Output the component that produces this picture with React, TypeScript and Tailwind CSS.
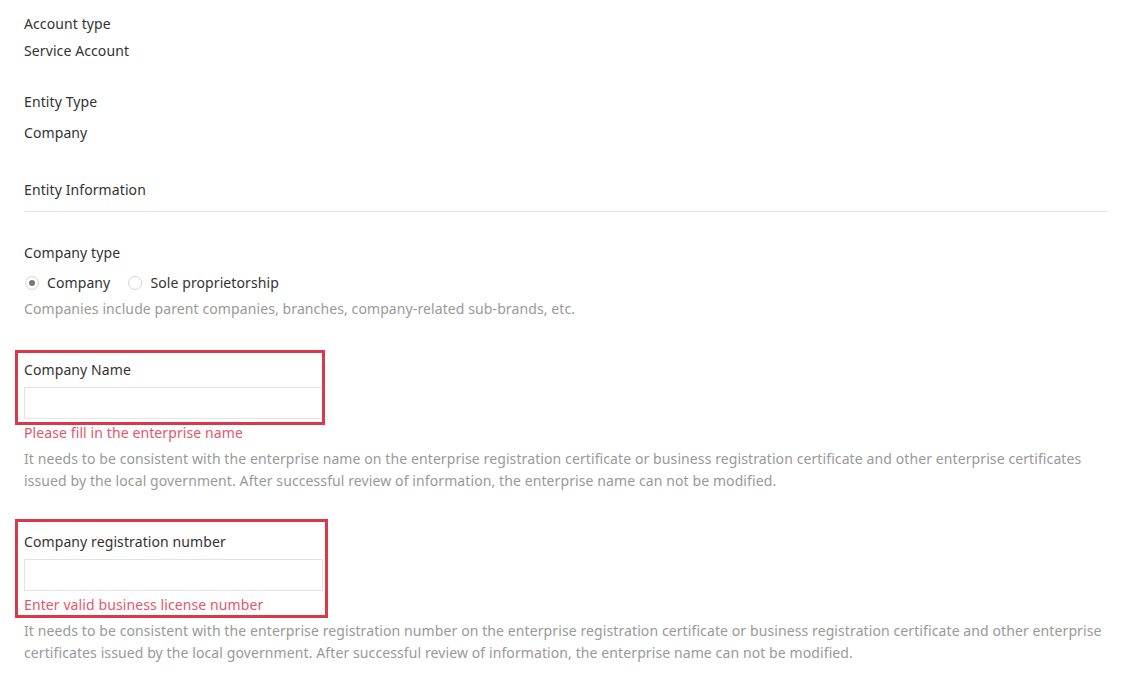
import React from "react";

const font = { fontFamily: '"Noto Sans", "Open Sans", sans-serif' };

function Radio({ checked, label }: { checked?: boolean; label: string }) {
  return (
    <label className="flex items-center gap-[8px]">
      <span className="w-[14px] h-[14px] rounded-full border border-[#d4d4d4] bg-white flex items-center justify-center">
        {checked && <span className="w-[6px] h-[6px] rounded-full bg-[#7a7a7a]" />}
      </span>
      <span className="text-[14px] text-[#333]">{label}</span>
    </label>
  );
}

export default function App() {
  return (
    <div className="w-[1140px] h-[685px] bg-white overflow-hidden" style={font}>
      <div className="pl-[24px] pr-[33px] pt-[13px] text-[14px] leading-[22px] tracking-[0.1px] text-[#333]">
        <div>Account type</div>
        <div className="mt-[5px]">Service Account</div>

        <div className="mt-[29px]">Entity Type</div>
        <div className="mt-[9px]">Company</div>

        <div className="mt-[35px]">Entity Information</div>
        <div className="mt-[10px] h-px bg-[#e5e5e5]" />

        <div className="mt-[30px]">Company type</div>
        <div className="mt-[8px] flex items-center gap-[18px] pl-[1px]">
          <Radio checked label="Company" />
          <Radio label="Sole proprietorship" />
        </div>
        <div className="mt-[4px] text-[#999]">
          Companies include parent companies, branches, company-related sub-brands, etc.
        </div>

        <div className="relative mt-[39px]">
          <div>Company Name</div>
          <div className="mt-[6px] w-[299px] h-[32px] border border-[#e3e3e3] bg-white" />
          <div className="absolute left-[-9px] top-[-9px] w-[310px] h-[75px] border-[3px] border-[#d9394b] pointer-events-none" />
        </div>
        <div className="mt-[3px] text-[#e5566a]">Please fill in the enterprise name</div>
        <div className="mt-[4px] text-[#999]">
          It needs to be consistent with the enterprise name on the enterprise registration certificate or business registration certificate and other enterprise certificates issued by the local government. After successful review of information, the enterprise name can not be modified.
        </div>

        <div className="relative mt-[39px]">
          <div>Company registration number</div>
          <div className="mt-[6px] w-[299px] h-[32px] border border-[#e3e3e3] bg-white" />
          <div className="mt-[3px] text-[#e5566a]">Enter valid business license number</div>
          <div className="absolute left-[-9px] top-[-12px] w-[313px] h-[99px] border-[3px] border-[#d9394b] pointer-events-none" />
        </div>
        <div className="mt-[4px] text-[#999]">
          It needs to be consistent with the enterprise registration number on the enterprise registration certificate or business registration certificate and other enterprise certificates issued by the local government. After successful review of information, the enterprise name can not be modified.
        </div>
      </div>
    </div>
  );
}
